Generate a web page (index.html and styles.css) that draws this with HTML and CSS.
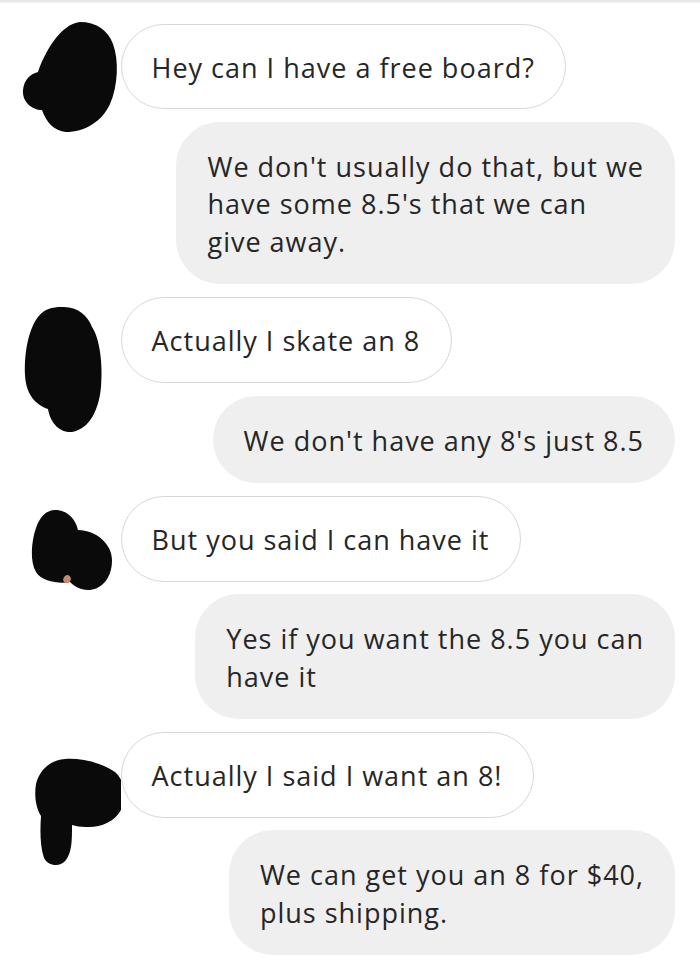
FILE: index.html
```html
<!DOCTYPE html>
<html>
<head>
<meta charset="utf-8">
<link rel="stylesheet" href="styles.css">
</head>
<body>
<div class="topline"></div>
<div class="thread">
  <div class="row in">
    <div class="avatar">
      <svg class="blob" viewBox="0 0 121 170" width="121" height="170"><path d="M80 8 C96 8 108 16 113 30 C119 46 118 72 110 90 C102 108 84 118 66 118 C54 117 46 108 42 96 C32 96 22 88 23 76 C24 66 30 60 38 58 C44 40 60 10 80 8 Z"/></svg>
    </div>
    <div class="bubble white">Hey can I have a free board?</div>
  </div>
  <div class="row out">
    <div class="bubble gray">We don't usually do that, but we<br>have some 8.5's that we can<br>give away.</div>
  </div>
  <div class="row in">
    <div class="avatar">
      <svg class="blob" viewBox="0 0 121 170" width="121" height="170"><path d="M62 20 C76 19 88 28 92 40 C100 52 103 78 101 100 C99 122 90 142 72 145 C58 146 50 134 48 122 C36 118 26 108 25 88 C24 62 30 40 38 30 C44 22 52 20 62 20 Z"/></svg>
    </div>
    <div class="bubble white">Actually I skate an 8</div>
  </div>
  <div class="row out">
    <div class="bubble gray">We don't have any 8's just 8.5</div>
  </div>
  <div class="row in">
    <div class="avatar">
      <svg class="blob" viewBox="0 0 121 170" width="121" height="170"><path d="M55 24 C68 24 76 34 78 44 C96 44 112 58 112 74 C112 94 100 104 88 104 C80 104 74 100 70 96 C60 98 42 96 36 86 C30 76 31 56 36 42 C40 30 47 24 55 24 Z"/><path class="skin" d="M63 94 C64 88 70 87 71 93 C70 98 65 99 63 94 Z"/></svg>
    </div>
    <div class="bubble white">But you said I can have it</div>
  </div>
  <div class="row out">
    <div class="bubble gray">Yes if you want the 8.5 you can<br>have it</div>
  </div>
  <div class="row in">
    <div class="avatar">
      <svg class="blob" viewBox="0 0 121 170" width="121" height="170"><path d="M65 37 C80 36 100 40 115 50 C124 58 127 72 122 86 C116 100 100 106 86 105 C80 105 76 104 72 103 C72 118 72 130 66 138 C60 146 48 144 44 136 C40 124 40 108 41 94 C36 86 34 74 36 62 C40 46 52 38 65 37 Z"/></svg>
    </div>
    <div class="bubble white">Actually I said I want an 8!</div>
  </div>
  <div class="row out">
    <div class="bubble gray">We can get you an 8 for $40,<br>plus shipping.</div>
  </div>
</div>
</body>
</html>
```

FILE: styles.css
```css
html, body {
  margin: 0;
  padding: 0;
  background: #ffffff;
}
body {
  font-family: "Open Sans", Roboto, "Liberation Sans", sans-serif;
  color: #262626;
}
.topline {
  height: 3px;
  background: linear-gradient(#e2e2e2, #f4f4f4);
}
.thread {
  display: flex;
  flex-direction: column;
  gap: 12.8px;
  padding: 20.5px 25px 20px 0;
}
.row {
  display: flex;
  align-items: flex-start;
}
.row.out {
  justify-content: flex-end;
}
.avatar {
  position: relative;
  width: 121px;
  flex: 0 0 121px;
  align-self: stretch;
}
.blob {
  position: absolute;
  left: 0;
  top: -10px;
  fill: #0a0a0a;
}
.blob .skin {
  fill: #c98a6a;
}
.bubble {
  font-size: 27px;
  letter-spacing: 1px;
  line-height: 37.5px;
  padding: 25.7px 31px 23.8px 31px;
  white-space: nowrap;
  box-sizing: border-box;
}
.bubble.white {
  border: 1.5px solid #d8d8d8;
  border-radius: 44px;
  padding: 24.2px 30.5px 22.3px 29.5px;
  background: #ffffff;
}
.bubble.gray {
  background: #efefef;
  border-radius: 44px;
}
```
